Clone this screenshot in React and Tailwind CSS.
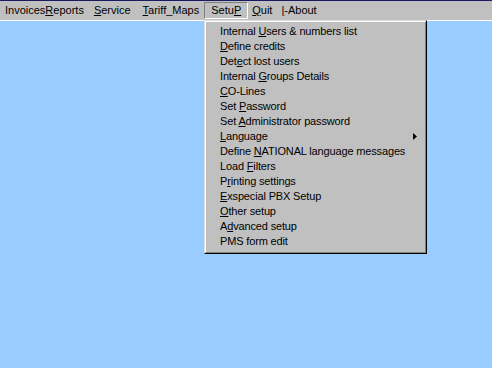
import React from 'react';

const U = ({ children }) => <span className="underline underline-offset-[1px]">{children}</span>;

const menuBar = [
  { key: 'inv', label: <>Invoices<U>R</U>eports</>, w: 'ml-[5px]' },
  { key: 'srv', label: <><U>S</U>ervice</>, w: 'ml-[10px]' },
  { key: 'tar', label: <><U>T</U>ariff_Maps</>, w: 'ml-[12px]' },
];

const items = [
  <>Internal <U>U</U>sers &amp; numbers list</>,
  <><U>D</U>efine credits</>,
  <>Det<U>e</U>ct lost users</>,
  <>Internal <U>G</U>roups Details</>,
  <><U>C</U>O-Lines</>,
  <>Set <U>P</U>assword</>,
  <>Set <U>A</U>dministrator password</>,
  <><U>L</U>anguage</>,
  <>Define <U>N</U>ATIONAL language messages</>,
  <>Load <U>F</U>ilters</>,
  <>P<U>r</U>inting settings</>,
  <><U>E</U>xspecial PBX Setup</>,
  <><U>O</U>ther setup</>,
  <>A<U>d</U>vanced setup</>,
  <>PMS form edit</>,
];

export default function App() {
  return (
    <div className="relative w-[492px] h-[368px] overflow-hidden bg-[#99ccff] font-['Liberation_Sans',Arial,sans-serif] text-[11px] text-black">
      {/* menu bar */}
      <div className="h-[21px] bg-[#c0c0c0] border-t border-[#1a1a60] border-b border-b-white flex items-center">
        {menuBar.map(m => (
          <span key={m.key} className={`${m.w} leading-[13px]`}>{m.label}</span>
        ))}
        <span className="ml-[5px] h-[17px] px-[6px] flex items-center border border-t-[#808080] border-l-[#808080] border-r-white border-b-white">
          Setu<U>P</U>
        </span>
        <span className="ml-[4px]"><U>Q</U>uit</span>
        <span className="ml-[9px]"><U>|</U>-About</span>
      </div>

      {/* dropdown */}
      <div className="absolute left-[204px] top-[20px] w-[223px] bg-[#c0c0c0] border border-t-[#dfdfdf] border-l-[#dfdfdf] border-r-black border-b-black">
        <div className="border border-t-white border-l-white border-r-[#808080] border-b-[#808080] pt-[2px] pb-[3px] tracking-[-0.15px]">
          {items.map((it, i) => (
            <div key={i} className="h-[15px] pl-[14px] pr-[8px] flex items-center justify-between">
              <span>{it}</span>
              {i === 7 && (
                <svg width="4" height="7" viewBox="0 0 4 7"><path d="M0 0 L4 3.5 L0 7 Z" fill="black" /></svg>
              )}
            </div>
          ))}
        </div>
      </div>
    </div>
  );
}
